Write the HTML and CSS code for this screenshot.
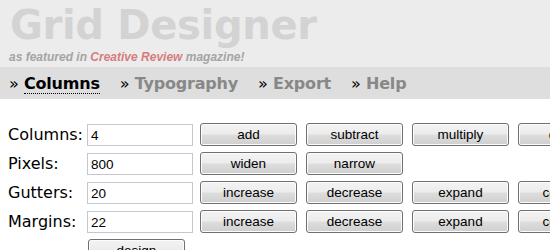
FILE: index.html
```html
<!DOCTYPE html>
<html lang="en">
<head>
    <meta charset="UTF-8">
    <title>Grid Designer</title>
    <link rel="stylesheet" href="styles.css">
</head>
<body>
    <div class="header">
        <h1>Grid Designer</h1>
        <p class="featured">as featured in <span class="mag">Creative Review</span> magazine!</p>
    </div>

    <ul class="nav">
        <li><span class="arrow">&raquo;</span> <a class="active">Columns</a></li>
        <li><span class="arrow">&raquo;</span> <a>Typography</a></li>
        <li><span class="arrow">&raquo;</span> <a>Export</a></li>
        <li><span class="arrow">&raquo;</span> <a>Help</a></li>
    </ul>

    <div class="form">
        <div class="row">
            <label>Columns:</label>
            <input type="text" value="4">
            <button>add</button>
            <button>subtract</button>
            <button>multiply</button>
            <button>divide</button>
        </div>
        <div class="row">
            <label>Pixels:</label>
            <input type="text" value="800">
            <button>widen</button>
            <button>narrow</button>
        </div>
        <div class="row">
            <label>Gutters:</label>
            <input type="text" value="20">
            <button>increase</button>
            <button>decrease</button>
            <button>expand</button>
            <button>contract</button>
        </div>
        <div class="row">
            <label>Margins:</label>
            <input type="text" value="22">
            <button>increase</button>
            <button>decrease</button>
            <button>expand</button>
            <button>contract</button>
        </div>
        <div class="row">
            <label></label>
            <button class="design">design</button>
        </div>
    </div>
</body>
</html>
```

FILE: styles.css
```css
html {
    overflow: hidden;
}
body {
    margin: 0;
    background-color: #fff;
    font-family: "DejaVu Sans", Verdana, sans-serif;
    color: #000;
}

.header {
    background-color: #ececec;
    padding: 5px 0 5px 10px;
    height: 57px;
}
.header h1 {
    margin: 0;
    font-size: 40px;
    line-height: 40px;
    font-weight: bold;
    color: #d3d3d3;
    letter-spacing: -0.3px;
}
.featured {
    margin: 5px 0 0 -1px;
    font-family: "Liberation Sans", Arial, sans-serif;
    font-size: 12px;
    line-height: 14px;
    font-weight: bold;
    font-style: italic;
    color: #a4a4a4;
}
.featured .mag {
    color: #d67c7c;
}

.nav {
    list-style: none;
    margin: 0;
    padding: 2px 0 0 9px;
    height: 30px;
    background-color: #dedede;
    display: flex;
    gap: 20px;
    font-size: 16px;
    line-height: 30px;
    font-weight: bold;
    letter-spacing: -0.2px;
    white-space: nowrap;
}
.nav .arrow {
    color: #000;
    font-weight: normal;
}
.nav a {
    color: #888;
}
.nav a.active {
    color: #000;
    border-bottom: 1px dotted #000;
}

.form {
    padding: 24px 0 0 8px;
}
.row {
    display: flex;
    align-items: center;
    height: 23px;
    margin-bottom: 6px;
    white-space: nowrap;
}
.row label {
    flex: 0 0 79px;
    font-size: 16px;
}
.row input {
    flex: 0 0 auto;
    box-sizing: border-box;
    width: 106px;
    height: 22px;
    margin: 1px 7px 0 0;
    padding: 0 3px;
    border: 1px solid #c3c8d0;
    font-family: "Liberation Sans", Arial, sans-serif;
    font-size: 13.5px;
    color: #000;
}
.row button {
    flex: 0 0 auto;
    box-sizing: border-box;
    width: 97px;
    height: 23px;
    margin-right: 9px;
    padding: 0;
    border: 1px solid #707070;
    border-radius: 3px;
    background: linear-gradient(#f3f3f3 0%, #ececec 48%, #dddddd 52%, #cfcfcf 100%);
    box-shadow: inset 0 0 0 1px #fcfcfc;
    font-family: "Liberation Sans", Arial, sans-serif;
    font-size: 13.5px;
    color: #000;
}
.row button.design {
    margin-left: 1px;
}
```
